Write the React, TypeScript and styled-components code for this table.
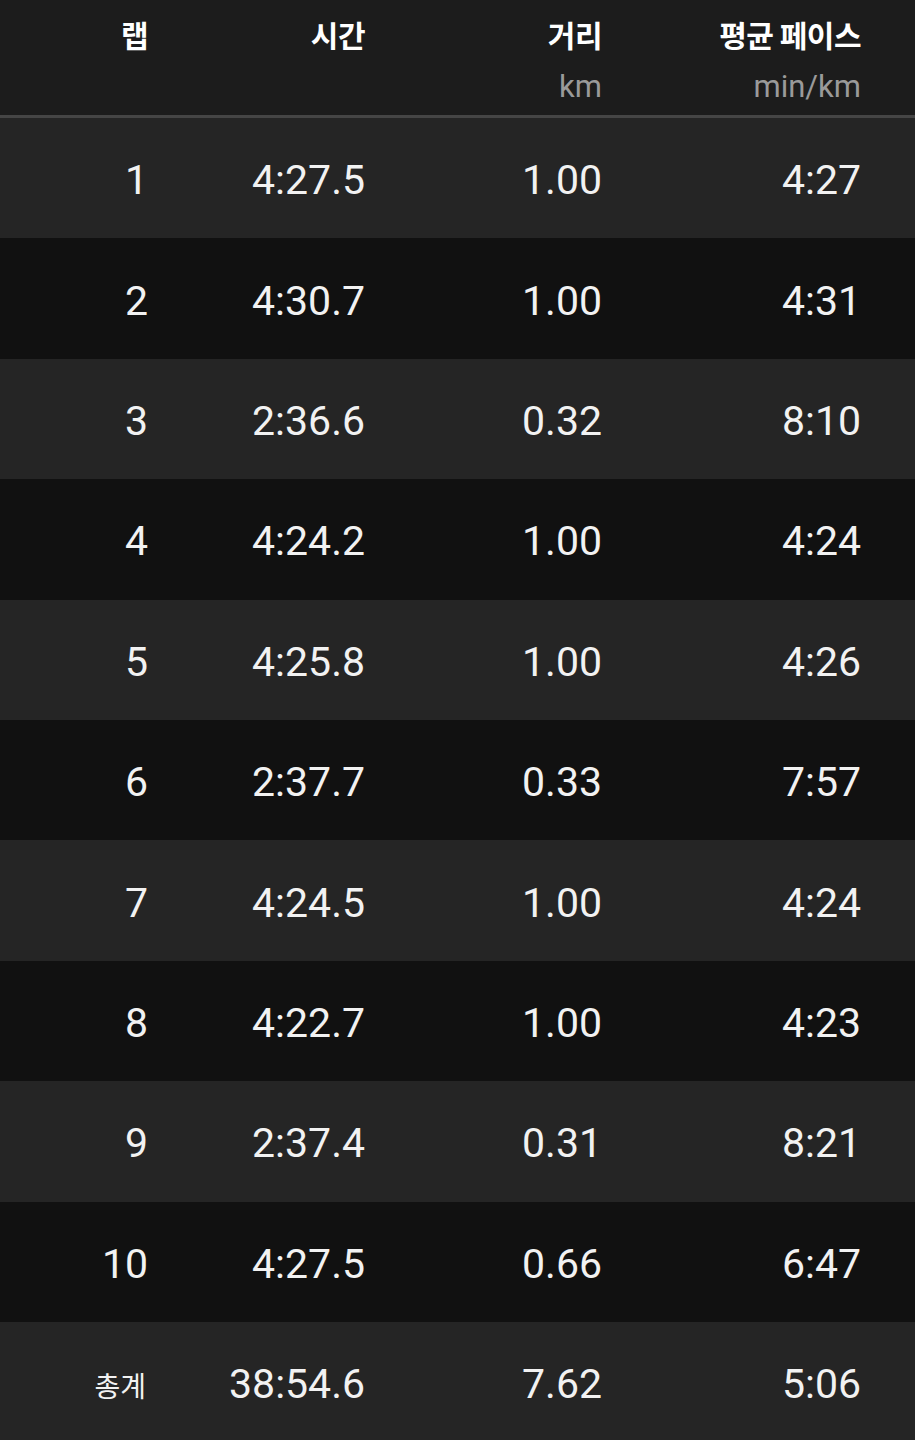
import styled, { createGlobalStyle } from "styled-components";

const laps = [
  { lap: "1", time: "4:27.5", dist: "1.00", pace: "4:27" },
  { lap: "2", time: "4:30.7", dist: "1.00", pace: "4:31" },
  { lap: "3", time: "2:36.6", dist: "0.32", pace: "8:10" },
  { lap: "4", time: "4:24.2", dist: "1.00", pace: "4:24" },
  { lap: "5", time: "4:25.8", dist: "1.00", pace: "4:26" },
  { lap: "6", time: "2:37.7", dist: "0.33", pace: "7:57" },
  { lap: "7", time: "4:24.5", dist: "1.00", pace: "4:24" },
  { lap: "8", time: "4:22.7", dist: "1.00", pace: "4:23" },
  { lap: "9", time: "2:37.4", dist: "0.31", pace: "8:21" },
  { lap: "10", time: "4:27.5", dist: "0.66", pace: "6:47" },
];

export default function App() {
  return (
    <>
      <GlobalStyle />
      <Table>
        <Header>
          <HeadCell>
            <Title>랩</Title>
          </HeadCell>
          <HeadCell>
            <Title>시간</Title>
          </HeadCell>
          <HeadCell>
            <Title>거리</Title>
            <Unit>km</Unit>
          </HeadCell>
          <HeadCell>
            <Title>평균 페이스</Title>
            <Unit>min/km</Unit>
          </HeadCell>
        </Header>
        {laps.map((row, i) => (
          <Row key={row.lap} $dark={i % 2 === 1}>
            <Cell>{row.lap}</Cell>
            <Cell>{row.time}</Cell>
            <Cell>{row.dist}</Cell>
            <Cell>{row.pace}</Cell>
          </Row>
        ))}
        <Row $dark={false}>
          <TotalLabel>총계</TotalLabel>
          <Cell>38:54.6</Cell>
          <Cell>7.62</Cell>
          <Cell>5:06</Cell>
        </Row>
      </Table>
    </>
  );
}

const GlobalStyle = createGlobalStyle`
  html, body {
    margin: 0;
    padding: 0;
    background: #1c1c1c;
  }
`;

const Table = styled.section`
  width: 915px;
  min-height: 1440px;
  background: #252525;
  font-family: Roboto, "Noto Sans CJK KR", sans-serif;
  color: #f2f2f2;
`;

const columns = "148px 217px 237px 259px";

const Header = styled.div`
  display: grid;
  grid-template-columns: ${columns};
  height: 115px;
  padding-right: 54px;
  background: #1c1c1c;
  border-bottom: 3px solid #454545;
`;

const HeadCell = styled.div`
  display: flex;
  flex-direction: column;
  align-items: flex-end;
  padding-top: 13px;
`;

const Title = styled.span`
  font-family: "Noto Sans CJK KR", sans-serif;
  font-size: 30px;
  font-weight: 700;
  line-height: 42px;
  letter-spacing: -0.5px;
  color: #ffffff;
`;

const Unit = styled.span`
  margin-top: 14px;
  font-size: 31px;
  line-height: 36px;
  color: #9a9a9a;
`;

const Row = styled.div<{ $dark: boolean }>`
  display: grid;
  grid-template-columns: ${columns};
  align-items: center;
  height: 120.4px;
  padding-right: 54px;
  background: ${(p) => (p.$dark ? "#111111" : "#252525")};
`;

const Cell = styled.div`
  padding-top: 4px;
  text-align: right;
  font-size: 41px;
  line-height: 48px;
`;

const TotalLabel = styled.div`
  padding-top: 6px;
  padding-right: 2px;
  text-align: right;
  font-family: "Noto Sans CJK KR", sans-serif;
  font-size: 28px;
  line-height: 40px;
`;
